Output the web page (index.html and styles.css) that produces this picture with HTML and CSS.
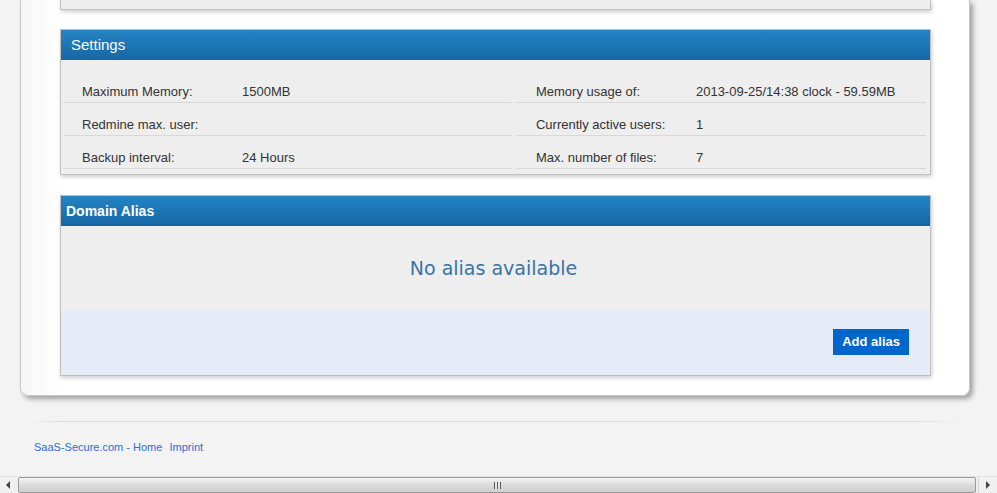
FILE: index.html
```html
<!DOCTYPE html>
<html lang="en">
<head>
    <meta charset="UTF-8">
    <meta name="viewport" content="width=device-width, initial-scale=1.0">
    <title>Settings</title>
    <link rel="stylesheet" href="styles.css">
</head>
<body>
    <div class="page">
        <div class="container">
            <div class="panel panel-top"></div>

            <div class="panel">
                <div class="panel-head">Settings</div>
                <div class="panel-body settings">
                    <div class="col col-left">
                        <div class="row"><span class="label">Maximum Memory:</span><span>1500MB</span></div>
                        <div class="row"><span class="label">Redmine max. user:</span><span></span></div>
                        <div class="row"><span class="label">Backup interval:</span><span>24 Hours</span></div>
                    </div>
                    <div class="col col-right">
                        <div class="row"><span class="label">Memory usage of:</span><span>2013-09-25/14:38 clock - 59.59MB</span></div>
                        <div class="row"><span class="label">Currently active users:</span><span>1</span></div>
                        <div class="row"><span class="label">Max. number of files:</span><span>7</span></div>
                    </div>
                </div>
            </div>

            <div class="panel panel-alias">
                <div class="panel-head bold">Domain Alias</div>
                <div class="alias-empty">No alias available</div>
                <div class="alias-actions">
                    <a href="#" class="button">Add alias</a>
                </div>
            </div>
        </div>

        <div class="footer">
            <a href="#">SaaS-Secure.com - Home</a>
            <a href="#">Imprint</a>
        </div>
    </div>

    <div class="hscroll">
        <div class="arrow arrow-left"></div>
        <div class="thumb"><span class="grip"></span></div>
        <div class="arrow arrow-right"></div>
    </div>
</body>
</html>
```

FILE: styles.css
```css
body, html {
    margin: 0;
    padding: 0;
    height: 100%;
    overflow: hidden;
    background: #f3f3f3;
    font-family: 'Liberation Sans', Arial, sans-serif;
    color: #222;
}
body {
    display: flex;
    flex-direction: column;
}
.page {
    flex: 1;
}
.container {
    margin-left: 20px;
    width: 871px;
    padding: 0 38px 19px 39px;
    background: linear-gradient(90deg, #f6f6f6, #ffffff 40px, #ffffff);
    border: 1px solid #c8c8c8;
    border-top: none;
    border-radius: 0 0 8px 8px;
    box-shadow: 3px 3px 5px rgba(0,0,0,0.35);
}
.panel {
    width: 869px;
    margin-top: 19px;
    background: #eeeeee;
    border: 1px solid #c0c0c0;
    box-shadow: 1px 2px 4px rgba(0,0,0,0.2);
}
.panel-top {
    margin-top: 0;
    height: 9px;
    border-top: none;
}
.panel-alias {
    margin-top: 20px;
}
.panel-head {
    height: 30px;
    line-height: 29px;
    padding-left: 10px;
    color: #fff;
    font-size: 15px;
    background: linear-gradient(180deg, #2584c4, #1667a4);
}
.panel-head.bold {
    height: 29px;
    padding-top: 1px;
    padding-left: 5px;
    font-size: 14px;
    font-weight: bold;
}
.settings {
    display: flex;
    gap: 5px;
    padding: 10px 4px 5px 2px;
}
.col-left {
    width: 449px;
}
.col-right {
    width: 411px;
}
.row {
    display: flex;
    height: 32px;
    line-height: 44px;
    padding-left: 19px;
    border-bottom: 1px solid #d8d8d8;
    font-size: 13px;
    color: #333;
}
.col-right .row {
    padding-left: 20px;
}
.label {
    width: 160px;
}
.alias-empty {
    height: 84px;
    line-height: 84px;
    padding-right: 4px;
    text-align: center;
    font-family: 'DejaVu Sans', Verdana, sans-serif;
    font-size: 19px;
    color: #3674a8;
}
.alias-actions {
    display: flex;
    justify-content: flex-end;
    height: 65px;
    padding-right: 21px;
    background: #e5ecf7;
}
.button {
    margin-top: 19px;
    display: inline-block;
    height: 26px;
    line-height: 26px;
    padding: 0 9px;
    background: #0066cc;
    color: #fff;
    font-size: 13px;
    font-weight: bold;
    text-decoration: none;
}
.footer {
    margin: 25px 37px 0 30px;
    padding: 19px 0 0 4px;
    border-top: 1px solid;
    border-image: linear-gradient(90deg, #f3f3f3, #dcdcdc 30px, #dcdcdc 880px, #f3f3f3) 1;
    font-size: 11px;
}
.footer a {
    color: #2c6ed6;
    text-decoration: none;
    margin-right: 4px;
}
.hscroll {
    display: flex;
    height: 16px;
    background: #f0f0f0;
    border-top: 1px solid #e2e2e2;
}
.arrow {
    width: 17px;
    position: relative;
}
.arrow::after {
    content: '';
    position: absolute;
    top: 4px;
    border-top: 4px solid transparent;
    border-bottom: 4px solid transparent;
}
.arrow-left::after {
    left: 6px;
    border-right: 4px solid #444;
}
.arrow-right {
    width: 18px;
    border-left: 1px solid #d8d8d8;
}
.arrow-right::after {
    left: 7px;
    border-left: 4px solid #444;
}
.thumb {
    flex: 1;
    margin: 0 2px 0 1px;
    border: 1px solid #9a9a9a;
    border-radius: 2px;
    background: linear-gradient(180deg, #f4f4f4, #dcdcdc 50%, #cfcfcf);
    display: flex;
    justify-content: center;
    align-items: center;
}
.grip {
    width: 7px;
    height: 7px;
    background: repeating-linear-gradient(90deg, #555 0 1px, #e8e8e8 1px 3px);
}
```
